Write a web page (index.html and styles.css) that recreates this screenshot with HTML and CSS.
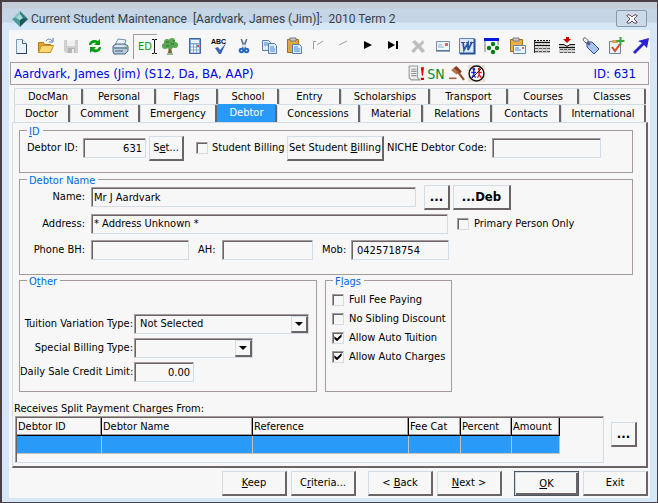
FILE: index.html
```html
<!DOCTYPE html>
<html lang="en">
<head>
<meta charset="utf-8">
<title>Current Student Maintenance</title>
<link rel="stylesheet" href="styles.css">
</head>
<body>
<div class="window">
  <header class="titlebar">
    <svg class="logo" viewBox="0 0 16 16"><path fill="#7fc4bd" d="M8 0 0 8l8 2z"/><path fill="#2b7f80" d="m8 0 8 8-8 2z"/><path fill="#4c9a9a" d="m0 8 8 8V5z"/><path fill="#1d5a60" d="m16 8-8 8V7z"/><path fill="#a9dcd5" d="m8 3-4 4 4 2 3-2z"/></svg>
    <h1>Current Student Maintenance&nbsp; [Aardvark, James (Jim)]:&nbsp; 2010 Term 2</h1>
    <button class="close" aria-label="Close"><svg viewBox="0 0 12 10"><path d="M1 1h3l2 2 2-2h3v1L8 5l3 3v1H8L6 7 4 9H1V8l3-3-3-3z" fill="#fff" stroke="#6a4c60"/></svg></button>
  </header>
  <main class="client">
    <nav class="toolbar" aria-label="Tools">
      <button aria-label="New"><svg viewBox="0 0 18 18"><path d="M4.500 2.500h6l4 4v10h-10z" fill="#e8f3fc" stroke="#7d9ab8"/><path d="M10.500 2.500v4h4" fill="#fff" stroke="#45688e"/><path d="M14.500 7v9.500h-10" fill="none" stroke="#24436a"/></svg></button>
      <button aria-label="Open"><svg viewBox="0 0 18 18"><path d="M1.500 15.500v-10h5l1 2h6v8z" fill="#e2a530" stroke="#b17a16"/><path d="m1.500 15.500 3-7h12l-3 7z" fill="#ffd873" stroke="#c98f20"/><path d="M9 4c2-3 5-2 6 0m1-3v4h-4" fill="none" stroke="#56779f"/></svg></button>
      <button aria-label="Save" disabled><svg viewBox="0 0 18 18"><path d="M2 3h14v13H4l-2-2z" fill="#cfcfcf"/><path d="M5 3h8v6H5z" fill="#f0f0f0"/><path d="M6 11h7v5H6z" fill="#b4b4b4"/><path d="M10 12h2v4h-2z" fill="#eee"/></svg></button>
      <button aria-label="Refresh"><svg viewBox="0 0 18 18"><path d="M3 8c0-5 6-6 9-4l2-2v6H8l2-2C7 5 6 7 5 8zM15 10c0 5-6 7-9 4l-2 2v-6h6l-2 2c3 1 4 0 5-2z" fill="#079b16"/></svg></button>
      <button aria-label="Print"><svg viewBox="0 0 18 18"><path d="m7 2 8 1-2 6-9-1z" fill="#eef5fb" stroke="#7590aa"/><path d="m2 9 3-2h9l3 2v5l-3 3H3l-1-2z" fill="#b8cbdc" stroke="#496480"/><path d="M3 11h12M4 14h8" stroke="#456380"/><path d="M4 9h9" stroke="#fff"/><circle cx="15" cy="11" r="1" fill="#38a040"/></svg></button>
      <button class="edit-mode"><span>ED</span><svg viewBox="0 0 5 15"><path d="M0 .500h2l.500 1 .500-1h2M0 14.500h2l.500-1 .500 1h2M2.500 1v13" fill="none" stroke="#111"/></svg></button>
      <button aria-label="Tree"><svg viewBox="0 0 18 18"><path d="M8 9h2l1 7H7z" fill="#7c6532"/><g fill="#5ba553"><circle cx="6" cy="5" r="3"/><circle cx="11" cy="4" r="3"/><circle cx="14" cy="8" r="3"/><circle cx="4" cy="9" r="3"/><circle cx="9" cy="8" r="4"/></g><path d="M5 5h3m2 2h3M5 9h3m4-5h2" stroke="#1f7526"/><path d="M6 17h6" stroke="#377a35"/></svg></button>
      <button aria-label="Calculator"><svg viewBox="0 0 18 18"><path d="M3.500 1.500h11v15h-11z" fill="#7fa5da" stroke="#3f66a0"/><path d="M5 3h8v3H5z" fill="#edf6ff"/><path d="M5 8.500h8M5 11.500h8M5 14.500h8" stroke="#fff" stroke-width="2" stroke-dasharray="2 1"/><path d="M11 8h2v2h-2z" fill="#d45c39"/></svg></button>
      <button aria-label="Spelling"><svg viewBox="0 0 18 18"><text x="1" y="7" class="abc">ABC</text><path d="m5 11 3-1 2 3 6-7-5 11H9z" fill="#3766b5"/></svg></button>
      <button aria-label="Cut"><svg viewBox="0 0 18 18"><path d="M5.500 2h1.500l4 9-2 1zM12.500 2H11L7 11l2 1z" fill="#52718f"/><g fill="none" stroke="#2567c4" stroke-width="2"><circle cx="6.500" cy="13.500" r="1.800"/><circle cx="11.500" cy="13.500" r="1.800"/></g></svg></button>
      <button aria-label="Copy"><svg viewBox="0 0 18 18"><g fill="#dcecff" stroke="#587da8"><path d="M2.500 3.500h6l2 2v8h-8z"/><path d="M8.500 6.500h6l2 2v8h-8z"/></g><path d="M4 6h4M4 8h4m2 2h4m-4 2h5m-5 2h5" stroke="#4a88ce"/></svg></button>
      <button aria-label="Paste"><svg viewBox="0 0 18 18"><path d="M2.500 2.500h11v13h-11z" fill="#e5a53d" stroke="#a36d19"/><path d="M5 1h6v3H5z" fill="#c8cbd0" stroke="#777"/><path d="M7.500 7.500h7l2 2v7h-9z" fill="#dcecff" stroke="#587da8"/><path d="M9 10h4m-4 2h6m-6 2h6" stroke="#4a88ce"/></svg></button>
      <button aria-label="First" disabled><svg viewBox="0 0 18 18"><path d="M3.500 12V4.500H6M7 8l6-4" fill="none" stroke="#a59a9c"/></svg></button>
      <button aria-label="Previous" disabled><svg viewBox="0 0 18 18"><path d="m5 8 8-4" fill="none" stroke="#a59a9c"/></svg></button>
      <button aria-label="Next record"><svg viewBox="0 0 18 18"><path d="m5 4 8 4-8 4z"/></svg></button>
      <button aria-label="Last"><svg viewBox="0 0 18 18"><path d="m4 4 7 4-7 4zM12 4h2v8h-2z"/></svg></button>
      <button aria-label="Delete" disabled><svg viewBox="0 0 18 18"><path d="m3 5 3-2 4 4 4-4 1 3-3 3 4 5-3 2-4-5-4 5-3-2 5-5z" fill="#bdbdbd"/></svg></button>
      <button aria-label="Mail"><svg viewBox="0 0 18 18"><path d="M2.500 4.500h13v9h-13z" fill="#f2f7fc" stroke="#7291b1"/><path d="M2 14h14" stroke="#385980"/><path d="M11 6h3v3h-3z" fill="#d66b55"/><path d="M4 8h4m-4 2h6" stroke="#8fa8c2"/></svg></button>
      <button aria-label="Word"><svg viewBox="0 0 18 18"><path d="M1.500 1.500h15v15h-15z" fill="#dce9fa" stroke="#5d86c4"/><path d="M16.500 2v14.500H2" fill="none" stroke="#24509a" stroke-width="2"/><path d="M3 5.500h4M8 5.500h3M12 5.500h4" stroke="#2755a0"/><path d="m5 5 1 8 4-7 0 7 4-8" fill="none" stroke="#2755a0" stroke-width="1.700"/></svg></button>
      <button aria-label="Groups"><svg viewBox="0 0 18 18"><path d="M2 15V2h13v6" fill="#fff" stroke="#777"/><path d="M1 1h15v3H1z" fill="#0018dd"/><g fill="#087b16"><circle cx="10" cy="7" r="2.200"/><circle cx="6" cy="11" r="2.200"/><circle cx="14" cy="11" r="2.200"/><circle cx="10" cy="15" r="2.200"/></g></svg></button>
      <button aria-label="Paste mail"><svg viewBox="0 0 18 18"><path d="M2.500 2.500h12v12h-12z" fill="#e9ad49" stroke="#a36d19"/><path d="M5 1h6v3H5z" fill="#c8cbd0" stroke="#777"/><path d="M5.500 8.500h12v8h-12z" fill="#edf5ff" stroke="#6284a8"/><path d="M14 10h2v2h-2z" fill="#d66b55"/><path d="M7 11h4m-4 2h6" stroke="#668cb5"/></svg></button>
      <button aria-label="Timetable"><svg viewBox="0 0 18 18"><path d="M1 4h16v12H1z" fill="#c4c4c4"/><path d="M1 3.500h16" stroke="#111" stroke-dasharray="2 1"/><path d="M1 5.500h16M1 8.500h16" stroke="#111"/><path d="M2 7h14" stroke="#eee" stroke-dasharray="2 1"/><path d="M2 11.500h15M2 14.500h15" stroke="#555" stroke-dasharray="3 1"/><path d="M2 13h14M2 10h14" stroke="#eee" stroke-dasharray="3 1"/><path d="M1.500 4v12" stroke="#333"/></svg></button>
      <button aria-label="Insert period"><svg viewBox="0 0 18 18"><path d="M1 8h16v8H1z" fill="#c4c4c4"/><path d="M1 7.500h5l3 2 3-2h5M1 10.500h16" fill="none" stroke="#111"/><path d="M2 12.500h15M2 15.500h15" stroke="#555" stroke-dasharray="3 1"/><path d="M2 14h14" stroke="#eee" stroke-dasharray="3 1"/><path d="M8 0h3v2h2L9 6 5 2h3z" fill="#d00000"/></svg></button>
      <button aria-label="Tag"><svg viewBox="0 0 18 18"><path d="m5 5 5 0 7 7-5 5-7-7z" fill="#a9c5f2" stroke="#2e45a5"/><circle cx="7" cy="7" r="1" fill="#fff" stroke="#445"/><path d="M7 7C2 6 0 2 2 1s5 3 5 6" fill="none" stroke="#555"/></svg></button>
      <button aria-label="Add task"><svg viewBox="0 0 18 18"><path d="M2.500 4.500h11v12h-11z" fill="#edf3fa" stroke="#6f84a0"/><path d="M5 3h6v3H5z" fill="#d9a35c"/><path d="m5 10 3 4 5-7" fill="none" stroke="#d64a27" stroke-width="2"/><path d="M13.500 0v8m-4-4h8" stroke="#38a83e" stroke-width="2"/></svg></button>
      <button aria-label="Go"><svg viewBox="0 0 18 18"><path d="m17 1-2 10-3-3-9 9-2-2 9-9-4-2z" fill="#2921d6"/></svg></button>
    </nav>

    <section class="banner">
      <span class="student">Aardvark, James (Jim) (S12, Da, BA, AAP)</span>
      <span class="alerts">
        <svg viewBox="0 0 16 16"><path d="M2 1h8v11l2 2H4l-2-2z" fill="#eee" stroke="#999"/><path d="M4 4h5M4 6h5M4 8h5M4 10h5" stroke="#999"/><path d="M13 2h3l-1 8h-1zM13 12h3v2h-3z" fill="#e00000"/></svg>
        <b class="sn">SN</b>
        <svg viewBox="0 0 16 16"><path d="m5 3 3-2 5 5-2 2z" fill="#8a3c20"/><path d="m3 5 2-2 5 4-2 2z" fill="#b9714a"/><path d="m9 6 6 8" stroke="#97502f" stroke-width="2"/><path d="M1 12.500h7" stroke="#a5603b" stroke-width="1.500"/></svg>
        <svg viewBox="0 0 16 16"><path d="M0 0h16v16H0z" fill="#eadfd2"/><circle cx="8" cy="8" r="7" fill="#fff" stroke="#111" stroke-width="1.300"/><g fill="none" stroke="#1726d2" stroke-width="1.300"><circle cx="5.500" cy="4" r=".700"/><path d="M5.500 5v4l-2 3m2-3 1.500 3M3 7h4.500"/></g><g fill="none" stroke="#e02020" stroke-width="1.300"><circle cx="10.500" cy="4" r=".700"/><path d="M10.500 5v4l-1.500 3m1.500-3 2 3M8.500 7H13"/></g><path d="m3 13 10-10" stroke="#111" stroke-width=".800"/></svg>
      </span>
      <span class="student-id">ID: 631</span>
    </section>

    <nav class="tabs" aria-label="Sections">
      <div class="tab-row tab-row-back"><button>DocMan</button><button>Personal</button><button>Flags</button><button>School</button><button>Entry</button><button>Scholarships</button><button>Transport</button><button>Courses</button><button>Classes</button></div>
      <div class="tab-row tab-row-front"><button>Doctor</button><button>Comment</button><button>Emergency</button><button class="active">Debtor</button><button>Concessions</button><button>Material</button><button>Relations</button><button>Contacts</button><button>International</button></div>
    </nav>

    <section class="panel">
      <fieldset class="id-group">
        <legend><u>I</u>D</legend>
        <label class="label-id" for="debtor-id">Debtor ID:</label>
        <input class="field w-id num" id="debtor-id" value="631">
        <button class="btn w-set">S<u>e</u>t...</button>
        <label class="check check-billing"><input type="checkbox">Student Billing</label>
        <button class="btn w-billing">Set Student <u>B</u>illing</button>
        <label class="label-niche" for="niche">NICHE Debtor Code:</label>
        <input class="field w-niche" id="niche">
      </fieldset>

      <fieldset class="name-group">
        <legend>Debtor Name</legend>
        <div class="row">
          <label class="label-name" for="name">Name:</label>
          <input class="field w-name" id="name" value="Mr J Aardvark">
          <button class="btn w-dots strong">...</button>
          <button class="btn w-deb strong">...Deb</button>
        </div>
        <div class="row">
          <label class="label-name" for="address">Address:</label>
          <input class="field w-address" id="address" value="* Address Unknown *">
          <label class="check check-primary"><input type="checkbox">Primary Person Only</label>
        </div>
        <div class="row">
          <label class="label-name" for="phone-bh">Phone BH:</label>
          <input class="field w-phone" id="phone-bh">
          <label class="label-phone" for="phone-ah">AH:</label>
          <input class="field w-ah" id="phone-ah">
          <label class="label-mob" for="mobile">Mob:</label>
          <input class="field w-phone indent" id="mobile" value="0425718754">
        </div>
      </fieldset>

      <div class="groups">
        <fieldset class="other-group">
          <legend>O<u>t</u>her</legend>
          <label for="tuition">Tuition Variation Type:</label>
          <span class="select w-tuition"><select id="tuition"><option>Not Selected</option></select><i></i></span>
          <label for="special">Special Billing Type:</label>
          <span class="select w-special"><select id="special"><option></option></select><i></i></span>
          <label for="limit">Daily Sale Credit Limit:</label>
          <input class="field w-limit num" id="limit" value="0.00">
        </fieldset>
        <fieldset class="flags-group">
          <legend>F<u>l</u>ags</legend>
          <label class="check"><input type="checkbox">Full Fee Paying</label>
          <label class="check"><input type="checkbox">No Sibling Discount</label>
          <label class="check"><input type="checkbox" checked>Allow Auto Tuition</label>
          <label class="check"><input type="checkbox" checked>Allow Auto Charges</label>
        </fieldset>
      </div>

      <h2>Receives Split Payment Charges From:</h2>
      <div class="split">
        <div class="grid-box">
          <table>
            <colgroup><col class="c-id"><col class="c-name"><col class="c-ref"><col class="c-cat"><col class="c-pct"><col class="c-amt"></colgroup>
            <thead><tr><th>Debtor ID</th><th>Debtor Name</th><th>Reference</th><th>Fee Cat</th><th>Percent</th><th>Amount</th></tr></thead>
            <tbody><tr><td></td><td></td><td></td><td></td><td></td><td></td></tr></tbody>
          </table>
        </div>
        <button class="btn w-dots strong">...</button>
      </div>
    </section>

    <footer class="actions">
      <div class="pair"><button class="btn"><u>K</u>eep</button><button class="btn">C<u>r</u>iteria...</button></div>
      <div class="pair"><button class="btn">&lt; <u>B</u>ack</button><button class="btn"><u>N</u>ext &gt;</button></div>
      <div class="pair"><button class="btn default"><u>O</u>K</button><button class="btn">Exit</button></div>
    </footer>
  </main>
</div>
</body>
</html>
```
FILE: styles.css
```css
:root {
  --face: #f7f7f7;
  --light: #d3dde9;
  --mid: #a59a9c;
  --dark: #6b6466;
  --accent: #299af7;
}

* { box-sizing: border-box; }

body {
  margin: 0;
  background: #4a4045;
  color: #000;
  font: 11px/14px "DejaVu Sans Condensed", "Noto Sans", sans-serif;
}

button, input, select { margin: 0; font: inherit; color: inherit; }
svg { display: block; }

.window {
  min-height: 100vh;
  padding: 0 7px 4px;
  background: #d6e7f7;
  border: solid #4a4045;
  border-width: 2px 1px 1px 2px;
  border-radius: 5px 5px 0 0;
}

/* Title bar */
.titlebar {
  display: flex;
  align-items: center;
  height: 28px;
  margin: 0 -7px;
  padding: 5px 10px 0;
  background: linear-gradient(#c5cdd7 0 6px, #c6d5e5 7px 20px, #d6e7f7 21px);
}
.logo { width: 16px; height: 16px; margin-right: 3px; }
.titlebar h1 { flex: 1; margin: 0; font: 12px/16px Roboto, "Noto Sans", sans-serif; color: #35414f; }
.close {
  display: grid;
  place-items: center;
  width: 31px;
  height: 17px;
  padding: 0;
  background: #cbd9e8;
  border: 1px solid #8b98a8;
  border-radius: 2px;
}
.close svg { width: 12px; height: 10px; }

.client { background: var(--face); }

/* Toolbar */
.toolbar {
  display: flex;
  justify-content: space-between;
  align-items: center;
  height: 32px;
  padding-left: 3px;
}
.toolbar button { width: 18px; padding: 0; border: 0; background: none; }
.toolbar svg { width: 18px; height: 18px; }
.toolbar .edit-mode {
  display: flex;
  align-items: center;
  width: 24px;
  height: 25px;
  margin: 0 -3px;
  padding-left: 4px;
  border: solid var(--mid);
  border-width: 1px 0 0 1px;
  color: #0a9b1c;
}
.edit-mode span { width: 14px; font-size: 11px; }
.toolbar .edit-mode svg { width: 5px; height: 15px; }
.abc { font: bold 7px "Liberation Sans", sans-serif; }

/* Student banner */
.banner {
  display: flex;
  align-items: center;
  height: 23px;
  margin: 0 1px;
  padding: 0 12px 0 3px;
  border: 1px solid var(--mid);
  color: #0000e6;
  font-size: 13px;
}
.student { flex: 1; }
.alerts { display: flex; align-items: center; gap: 3px; margin-right: 109px; }
.alerts svg { width: 17px; height: 17px; }
.sn { font: 14px "DejaVu Sans Condensed", sans-serif; color: #0a8a1c; }

/* Tabs */
.tabs { padding: 3px 4px 0 5px; }
.tab-row { display: grid; }
.tab-row-back { height: 16px; grid-template-columns: 69fr 73fr 62fr 61fr 62fr 89fr 78fr 71fr 67fr; }
.tab-row-front { height: 18px; grid-template-columns: 56fr 70fr 77fr 60fr 83fr 63fr 69fr 69fr 85fr; }
.tab-row button {
  min-width: 0;
  padding: 0;
  border: solid var(--light);
  border-width: 1px 2px 0 1px;
  border-right-color: var(--dark);
  border-radius: 2px 2px 0 0;
  background: var(--face);
  white-space: nowrap;
}
.tab-row .active { padding-bottom: 2px; background: var(--accent); border-left-color: var(--accent); border-top-color: var(--accent); color: #fff; }

/* Page panel */
.panel {
  margin: 0 2px 0 3px;
  padding: 7px 13px 3px 6px;
  border: solid var(--light);
  border-width: 1px 2px 2px 1px;
  border-right-color: var(--dark);
  border-bottom-color: var(--dark);
}

fieldset {
  position: relative;
  min-width: 0;
  margin: 0;
  padding: 0;
  border: 1px solid var(--mid);
}
legend {
  position: absolute;
  top: -6px;
  left: 7px;
  padding: 0 3px 0 2px;
  background: var(--face);
  color: #0069e0;
  line-height: 13px;
}
label { white-space: nowrap; }

.field, .select {
  height: 20px;
  padding: 0 4px 0 2px;
  background: var(--face);
  border: solid var(--light);
  border-width: 1px;
  border-top-color: var(--mid);
  border-left-color: var(--mid);
  border-radius: 0;
  box-shadow: inset 1px 1px var(--dark);
}
.num { text-align: right; padding-right: 3px; }
.indent { padding-left: 5px; }

.btn {
  height: 25px;
  padding: 0;
  background: var(--face);
  border: solid var(--light);
  border-width: 1px 2px 2px 1px;
  border-right-color: var(--dark);
  border-bottom-color: var(--dark);
  border-radius: 0;
  white-space: nowrap;
}
.strong { font-size: 13px; font-weight: bold; }

.check { display: flex; align-items: center; gap: 5px; }
.check input {
  appearance: none;
  display: grid;
  place-items: center;
  width: 12px;
  height: 12px;
  border: 1px solid var(--light);
  border-top-color: var(--mid);
  border-left-color: var(--mid);
  box-shadow: inset 1px 1px var(--dark);
}
.check input:checked::after {
  content: "";
  width: 8px;
  height: 8px;
  background: #000;
  clip-path: polygon(5% 35%, 38% 62%, 95% 5%, 95% 42%, 38% 98%, 5% 70%);
}

.id-group { display: flex; align-items: center; height: 43px; padding: 0 0 7px 7px; }
.label-id { width: 56px; }
.w-id { width: 63px; }
.w-set { width: 35px; margin-left: 3px; }
.check-billing { width: 91px; margin-left: 12px; gap: 4px; }
.w-billing { width: 97px; }
.label-niche { width: 108px; padding-left: 3px; }
.w-niche { width: 109px; }

.name-group { height: 96px; margin-top: 6px; padding-top: 4px; }
.row { display: flex; align-items: center; height: 26px; }
.row:nth-of-type(2) { height: 27px; }
.label-name { width: 71px; padding-right: 6px; text-align: right; }
.w-name { width: 325px; margin-right: 8px; }
.w-dots { width: 26px; margin-right: 3px; }
.w-deb { width: 58px; }
.w-address { width: 357px; margin-right: 9px; }
.w-phone { width: 98px; }
.w-ah { width: 91px; }
.label-phone { width: 33px; padding-left: 9px; }
.label-mob { width: 38px; padding-left: 9px; }

.groups { display: flex; gap: 8px; margin-top: 5px; }
.other-group {
  display: grid;
  grid-template-columns: 113px auto;
  grid-auto-rows: 20px;
  gap: 4px 1px;
  align-content: end;
  width: 298px;
  height: 112px;
  padding-bottom: 9px;
}
.other-group > label { line-height: 20px; text-align: right; }
.select { position: relative; display: block; padding: 0; }
.select select {
  width: 100%;
  height: 18px;
  padding: 0 20px 0 5px;
  appearance: none;
  background: none;
  border: 0;
}
.select i {
  position: absolute;
  top: 1px;
  right: 0;
  display: grid;
  place-items: center;
  width: 17px;
  height: 17px;
  background: var(--face);
  border: solid var(--light);
  border-width: 1px 2px 2px 1px;
  border-right-color: var(--dark);
  border-bottom-color: var(--dark);
  pointer-events: none;
}
.select i::after { content: ""; border: solid transparent; border-width: 4px 4px 0; border-top-color: #000; }
.w-tuition { width: 175px; }
.w-special { width: 119px; }
.w-limit { width: 60px; }

.flags-group { width: 127px; padding: 9px 0 0 6px; }
.flags-group .check { height: 19px; }

h2 { margin: 10px 0 0 -5px; font-size: 11px; line-height: 14px; font-weight: normal; }
.split { display: flex; align-items: flex-start; gap: 7px; margin: 0 -10px 0 -4px; }
.grid-box {
  flex: 1;
  height: 47px;
  border: 1px solid var(--light);
  border-top-color: var(--mid);
  border-left-color: var(--mid);
  box-shadow: inset 1px 1px var(--dark);
  padding: 1px 0 0 1px;
}
.split .btn { margin: 6px 6px 0 0; }
table { table-layout: fixed; width: 543px; border-collapse: separate; border-spacing: 0; }
th {
  height: 18px;
  padding: 0 0 0 1px;
  border: solid #000;
  border-width: 0 1px 1px 0;
  box-shadow: inset -1px -1px var(--mid);
  text-align: left;
  font-weight: normal;
}
td { height: 18px; padding: 0; background: var(--accent); border: solid #c3c3c3; border-width: 0 1px 1px 0; }
.c-id { width: 85px; }
.c-name { width: 151px; }
.c-ref { width: 156px; }
.c-cat { width: 52px; }
.c-pct { width: 51px; }
.c-amt { width: 48px; }

/* Bottom buttons */
.actions { display: flex; justify-content: flex-end; gap: 12px; padding: 3px 2px 2px 0; }
.pair { display: flex; gap: 4px; }
.pair .btn { width: 65px; }
.btn.default { border: 1px solid #4c5563; box-shadow: inset 1px 1px var(--light), inset -2px -2px var(--dark); }
```
